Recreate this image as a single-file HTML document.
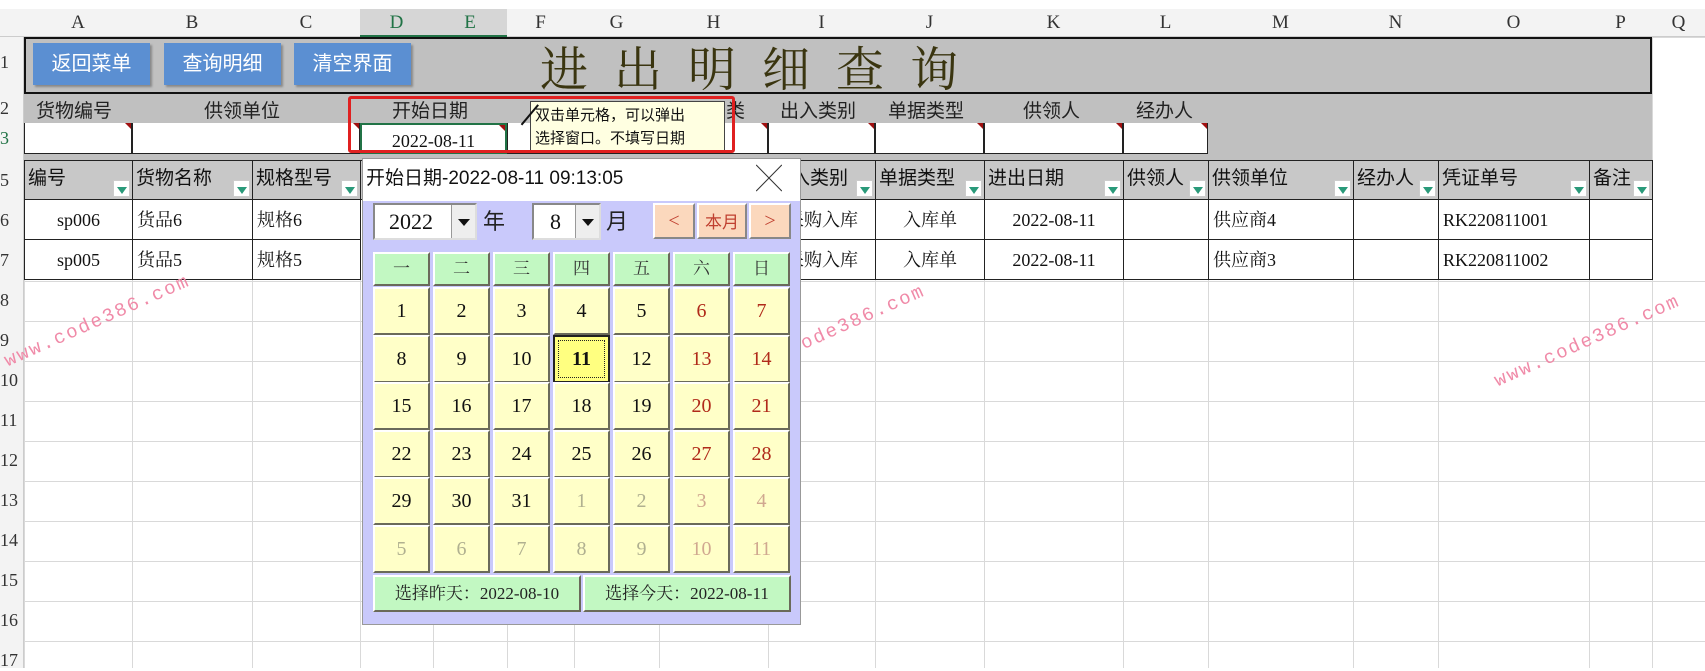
<!DOCTYPE html>
<html><head><meta charset="utf-8"><style>
*{margin:0;padding:0;box-sizing:border-box}
body{width:1705px;height:668px;overflow:hidden;background:#fff;position:relative;font-family:"Liberation Serif","Noto Serif CJK SC",serif;color:#111}
.a{position:absolute}
.vl{position:absolute;width:1px;background:#d9d9d9;top:9px;bottom:0}
.hl{position:absolute;height:1px;background:#d9d9d9;left:0;right:0}
.ch{position:absolute;top:9px;height:28px;font-size:19px;color:#333;text-align:center;line-height:28px}
.rh{position:absolute;left:0;width:24px;font-size:18px;color:#333;text-align:left;padding-left:0}
.btn{position:absolute;top:43px;height:42px;width:117px;background:#5b8fd2;color:#fff;font-family:"Liberation Sans","Noto Sans CJK SC",sans-serif;font-size:20px;text-align:center;line-height:42px;box-shadow:2px 2px 2px #888}
.lbl{position:absolute;top:96px;font-size:19px;font-family:"Liberation Sans","Noto Sans CJK SC",sans-serif;color:#222}
.in{position:absolute;top:123px;height:31px;background:#fff;border:1px solid #222;border-top:none}
.in:after{content:"";position:absolute;right:0;top:0;border-top:6px solid #a01010;border-left:6px solid transparent}
.th{position:absolute;top:160px;height:40px;background:#c8c8c8;border:1px solid #222;font-size:19px;font-family:"Liberation Sans","Noto Sans CJK SC",sans-serif;line-height:36px;padding-left:3px;white-space:nowrap;overflow:hidden}
.fb{position:absolute;right:2px;bottom:2px;width:17px;height:17px;background:#fff;border:1px solid #ccc}
.fb:after{content:"";position:absolute;left:3px;top:6px;border-top:7px solid #2a9a7a;border-left:5px solid transparent;border-right:5px solid transparent}
.td{position:absolute;height:41px;border:1px solid #222;background:#fff;font-size:18px;line-height:40px;white-space:nowrap;overflow:hidden;padding-left:4px}
.c{text-align:center;padding-left:0}
.wm{position:absolute;color:#f08aa8;font-size:19px;font-family:"Liberation Mono",monospace;transform:rotate(-24deg);transform-origin:left bottom;letter-spacing:2px;white-space:nowrap}
.cell{position:absolute;width:57px;background:#ffffc8;border-top:2px solid #fff;border-left:2px solid #fff;border-right:2px solid #6a6a5a;border-bottom:2px solid #6a6a5a;text-align:center;font-size:20px}
.hd{background:#c2f8c2}
</style></head><body>
<!-- grid lines -->
<div class="vl" style="left:24px"></div><div class="vl" style="left:132px"></div><div class="vl" style="left:252px"></div><div class="vl" style="left:360px"></div><div class="vl" style="left:433px"></div><div class="vl" style="left:507px"></div><div class="vl" style="left:574px"></div><div class="vl" style="left:659px"></div><div class="vl" style="left:768px"></div><div class="vl" style="left:875px"></div><div class="vl" style="left:984px"></div><div class="vl" style="left:1123px"></div><div class="vl" style="left:1208px"></div><div class="vl" style="left:1353px"></div><div class="vl" style="left:1438px"></div><div class="vl" style="left:1589px"></div><div class="vl" style="left:1652px"></div>
<div class="hl" style="top:37px"></div><div class="hl" style="top:281px"></div><div class="hl" style="top:321px"></div><div class="hl" style="top:361px"></div><div class="hl" style="top:401px"></div><div class="hl" style="top:441px"></div><div class="hl" style="top:481px"></div><div class="hl" style="top:521px"></div><div class="hl" style="top:561px"></div><div class="hl" style="top:601px"></div><div class="hl" style="top:641px"></div>
<!-- column headers -->
<div class="a" style="left:0;top:9px;width:1705px;height:28px;background:#f3f3f3;border-bottom:1px solid #ccc"></div>
<div class="a" style="left:360px;top:9px;width:147px;height:28px;background:#d6d6d6;border-bottom:2px solid #217346"></div>
<div class="ch" style="left:24px;width:108px">A</div><div class="ch" style="left:132px;width:120px">B</div><div class="ch" style="left:252px;width:108px">C</div><div class="ch" style="left:360px;width:73px;color:#217346">D</div><div class="ch" style="left:433px;width:74px;color:#217346">E</div><div class="ch" style="left:507px;width:67px">F</div><div class="ch" style="left:574px;width:85px">G</div><div class="ch" style="left:659px;width:109px">H</div><div class="ch" style="left:768px;width:107px">I</div><div class="ch" style="left:875px;width:109px">J</div><div class="ch" style="left:984px;width:139px">K</div><div class="ch" style="left:1123px;width:85px">L</div><div class="ch" style="left:1208px;width:145px">M</div><div class="ch" style="left:1353px;width:85px">N</div><div class="ch" style="left:1438px;width:151px">O</div><div class="ch" style="left:1589px;width:63px">P</div><div class="ch" style="left:1652px;width:53px">Q</div>
<div class="a" style="left:0;top:37px;width:24px;height:631px;background:#f3f3f3;border-right:1px solid #ccc"></div>
<div class="rh" style="top:52px">1</div><div class="rh" style="top:98px">2</div><div class="rh" style="top:128px;color:#217346">3</div><div class="rh" style="top:170px">5</div><div class="rh" style="top:210px">6</div><div class="rh" style="top:250px">7</div><div class="rh" style="top:290px">8</div><div class="rh" style="top:330px">9</div><div class="rh" style="top:370px">10</div><div class="rh" style="top:410px">11</div><div class="rh" style="top:450px">12</div><div class="rh" style="top:490px">13</div><div class="rh" style="top:530px">14</div><div class="rh" style="top:570px">15</div><div class="rh" style="top:610px">16</div><div class="rh" style="top:650px">17</div>
<!-- gray area -->
<div class="a" style="left:24px;top:37px;width:1628px;height:123px;background:#c0c0c0"></div>
<div class="a" style="left:24px;top:37px;width:1628px;height:57px;border:2px solid #111"></div>
<div class="btn" style="left:33px">返回菜单</div><div class="btn" style="left:164px">查询明细</div><div class="btn" style="left:294px">清空界面</div>
<div class="a" style="left:540px;top:38px;font-size:48px;color:#3a3510;font-family:'Noto Serif CJK SC',serif;letter-spacing:26px;line-height:56px">进出明细查询</div>
<div class="lbl" style="left:36px">货物编号</div><div class="lbl" style="left:204px">供领单位</div><div class="lbl" style="left:392px">开始日期</div><div class="lbl" style="left:726px">类</div><div class="lbl" style="left:780px">出入类别</div><div class="lbl" style="left:888px">单据类型</div><div class="lbl" style="left:1023px">供领人</div><div class="lbl" style="left:1136px">经办人</div>
<div class="in" style="left:24px;width:108px"></div><div class="in" style="left:132px;width:228px"></div><div class="in" style="left:360px;width:147px;border:2px solid #217346;font-size:18px;text-align:center;line-height:32px">2022-08-11</div><div class="in" style="left:507px;width:152px"></div><div class="in" style="left:659px;width:109px"></div><div class="in" style="left:768px;width:107px"></div><div class="in" style="left:875px;width:109px"></div><div class="in" style="left:984px;width:139px"></div><div class="in" style="left:1123px;width:85px"></div>
<!-- table -->
<div class="th" style="left:24px;width:109px">编号<span class="fb"></span></div><div class="th" style="left:132px;width:121px">货物名称<span class="fb"></span></div><div class="th" style="left:252px;width:109px">规格型号<span class="fb"></span></div><div class="th" style="left:360px;width:409px"></div><div class="th" style="left:768px;width:108px">出入类别<span class="fb"></span></div><div class="th" style="left:875px;width:110px">单据类型<span class="fb"></span></div><div class="th" style="left:984px;width:140px">进出日期<span class="fb"></span></div><div class="th" style="left:1123px;width:86px">供领人<span class="fb"></span></div><div class="th" style="left:1208px;width:146px">供领单位<span class="fb"></span></div><div class="th" style="left:1353px;width:86px">经办人<span class="fb"></span></div><div class="th" style="left:1438px;width:152px">凭证单号<span class="fb"></span></div><div class="th" style="left:1589px;width:64px">备注<span class="fb"></span></div>
<div class="td c" style="left:24px;top:199px;width:109px">sp006</div><div class="td" style="left:132px;top:199px;width:121px">货品6</div><div class="td" style="left:252px;top:199px;width:109px">规格6</div><div class="td c" style="left:768px;top:199px;width:108px">采购入库</div><div class="td c" style="left:875px;top:199px;width:110px">入库单</div><div class="td c" style="left:984px;top:199px;width:140px">2022-08-11</div><div class="td" style="left:1123px;top:199px;width:86px"></div><div class="td" style="left:1208px;top:199px;width:146px">供应商4</div><div class="td" style="left:1353px;top:199px;width:86px"></div><div class="td" style="left:1438px;top:199px;width:152px">RK220811001</div><div class="td" style="left:1589px;top:199px;width:64px"></div>
<div class="td c" style="left:24px;top:239px;width:109px">sp005</div><div class="td" style="left:132px;top:239px;width:121px">货品5</div><div class="td" style="left:252px;top:239px;width:109px">规格5</div><div class="td c" style="left:768px;top:239px;width:108px">采购入库</div><div class="td c" style="left:875px;top:239px;width:110px">入库单</div><div class="td c" style="left:984px;top:239px;width:140px">2022-08-11</div><div class="td" style="left:1123px;top:239px;width:86px"></div><div class="td" style="left:1208px;top:239px;width:146px">供应商3</div><div class="td" style="left:1353px;top:239px;width:86px"></div><div class="td" style="left:1438px;top:239px;width:152px">RK220811002</div><div class="td" style="left:1589px;top:239px;width:64px"></div>
<!-- watermarks -->
<div class="wm" style="left:10px;top:350px">www.code386.com</div>
<div class="wm" style="left:745px;top:360px">www.code386.com</div>
<div class="wm" style="left:1500px;top:370px">www.code386.com</div>
<!-- tooltip + red box -->
<div class="a" style="left:530px;top:101px;width:195px;height:50px;background:#ffffe1;border:1px solid #444;font-size:15px;line-height:23px;padding:1px 4px;font-family:'Noto Sans CJK SC',sans-serif">双击单元格，可以弹出<br>选择窗口。不填写日期</div>
<div class="a" style="left:512px;top:104px;width:26px;height:1.5px;background:#111;transform:rotate(-50deg);transform-origin:right center"></div>
<div class="a" style="left:348px;top:96px;width:387px;height:57px;border:3px solid #e02020;border-radius:3px"></div>
<!-- dialog -->
<div class="a" style="left:362px;top:158px;width:439px;height:467px;background:#c9c9fb;border:1px solid #999"></div>
<div class="a" style="left:363px;top:159px;width:437px;height:42px;background:#fff;font-size:19px;font-family:'Liberation Sans','Noto Sans CJK SC',sans-serif;line-height:40px;padding-left:3px">开始日期-2022-08-11 09:13:05<span style="position:absolute;right:18px;top:0;font-size:26px;font-weight:100;color:#333">╳</span></div>
<div class="a" style="left:373px;top:203px;width:104px;height:37px;background:#fff;border:2px solid #888;border-right-color:#ddd;border-bottom-color:#ddd;font-size:22px;line-height:33px;padding-left:14px">2022<span style="position:absolute;right:0;top:0;width:24px;height:33px;background:#eee;border-left:1px solid #999"><i style="position:absolute;left:6px;top:14px;border-top:7px solid #111;border-left:6px solid transparent;border-right:6px solid transparent"></i></span></div>
<div class="a" style="left:483px;top:204px;font-size:22px;color:#222;font-family:'Noto Sans CJK SC',sans-serif">年</div>
<div class="a" style="left:532px;top:203px;width:69px;height:37px;background:#fff;border:2px solid #888;border-right-color:#ddd;border-bottom-color:#ddd;font-size:22px;line-height:33px;padding-left:16px">8<span style="position:absolute;right:0;top:0;width:24px;height:33px;background:#eee;border-left:1px solid #999"><i style="position:absolute;left:6px;top:14px;border-top:7px solid #111;border-left:6px solid transparent;border-right:6px solid transparent"></i></span></div>
<div class="a" style="left:606px;top:204px;font-size:22px;color:#222;font-family:'Noto Sans CJK SC',sans-serif">月</div>
<div class="a" style="left:653px;top:203px;width:42px;height:36px;background:#fbd8bd;border-top:2px solid #fff;border-left:2px solid #fff;border-right:2px solid #888;border-bottom:2px solid #888;text-align:center;font-size:20px;line-height:32px;color:#c04030">&lt;</div>
<div class="a" style="left:697px;top:203px;width:50px;height:36px;background:#fbd8bd;border-top:2px solid #fff;border-left:2px solid #fff;border-right:2px solid #888;border-bottom:2px solid #888;text-align:center;font-size:17px;line-height:32px;color:#c04030;font-family:'Noto Sans CJK SC',sans-serif">本月</div>
<div class="a" style="left:749px;top:203px;width:42px;height:36px;background:#fbd8bd;border-top:2px solid #fff;border-left:2px solid #fff;border-right:2px solid #888;border-bottom:2px solid #888;text-align:center;font-size:20px;line-height:32px;color:#c04030">&gt;</div>
<div class="cell hd" style="left:373px;top:252px;height:34px;line-height:30px;font-size:17px;color:#333">一</div><div class="cell hd" style="left:433px;top:252px;height:34px;line-height:30px;font-size:17px;color:#333">二</div><div class="cell hd" style="left:493px;top:252px;height:34px;line-height:30px;font-size:17px;color:#333">三</div><div class="cell hd" style="left:553px;top:252px;height:34px;line-height:30px;font-size:17px;color:#333">四</div><div class="cell hd" style="left:613px;top:252px;height:34px;line-height:30px;font-size:17px;color:#333">五</div><div class="cell hd" style="left:673px;top:252px;height:34px;line-height:30px;font-size:17px;color:#333">六</div><div class="cell hd" style="left:733px;top:252px;height:34px;line-height:30px;font-size:17px;color:#333">日</div>
<div id="g"></div>
<script>
var g='',d=[1,2,3,4,5,6,7,8,9,10,11,12,13,14,15,16,17,18,19,20,21,22,23,24,25,26,27,28,29,30,31,1,2,3,4,5,6,7,8,9,10,11];
for(var i=0;i<42;i++){var r=Math.floor(i/7),c=i%7,col=(i>=31)?(c>=5?'#d0a890':'#b0b090'):(c>=5?'#b02a1a':'#111');var ex='';if(i==10)ex='background:#ffff80;border:2px solid #222;font-weight:bold;outline:1px dotted #222;outline-offset:-6px;';
g+='<div class="cell" style="left:'+(373+c*60)+'px;top:'+(287+r*47.5)+'px;height:48px;line-height:44px;color:'+col+';'+ex+'">'+d[i]+'</div>';}
document.getElementById('g').outerHTML=g;
</script>
<div class="cell hd" style="left:373px;top:575px;width:208px;height:37px;line-height:33px;font-size:17px;color:#222">选择昨天：2022-08-10</div>
<div class="cell hd" style="left:583px;top:575px;width:208px;height:37px;line-height:33px;font-size:17px;color:#222">选择今天：2022-08-11</div>
</body></html>
